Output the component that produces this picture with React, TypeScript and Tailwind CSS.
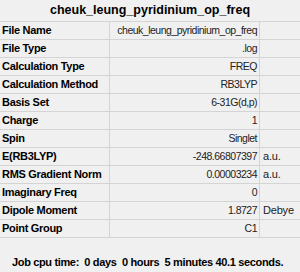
const ROWS: [string, string, string][] = [
  ["File Name", "cheuk_leung_pyridinium_op_freq", ""],
  ["File Type", ".log", ""],
  ["Calculation Type", "FREQ", ""],
  ["Calculation Method", "RB3LYP", ""],
  ["Basis Set", "6-31G(d,p)", ""],
  ["Charge", "1", ""],
  ["Spin", "Singlet", ""],
  ["E(RB3LYP)", "-248.66807397", "a.u."],
  ["RMS Gradient Norm", "0.00003234", "a.u."],
  ["Imaginary Freq", "0", ""],
  ["Dipole Moment", "1.8727", "Debye"],
  ["Point Group", "C1", ""],
];

export default function App() {
  return (
    <div
      className="w-[300px] h-[272px] bg-[#f0f0f0] text-black overflow-hidden"
      style={{ fontFamily: "'Liberation Sans', Arial, sans-serif" }}
    >
      <div className="h-[21px] flex items-center justify-center font-bold text-[12.5px]">
        cheuk_leung_pyridinium_op_freq
      </div>

      <div className="border-t border-[#d4d4d4]">
        {ROWS.map(([label, value, unit]) => (
          <div key={label} className="flex h-[18px] border-b border-[#d4d4d4] text-[11px]">
            <div className="w-[110px] border-r border-[#d4d4d4] pl-[2px] font-bold tracking-[-0.3px] flex items-center">
              {label}
            </div>
            <div className="w-[150px] border-r border-[#d4d4d4] pr-[2px] flex items-center justify-end text-[10.5px] tracking-[-0.5px] text-[#222]">
              {value}
            </div>
            <div className="flex-1 pl-[3px] flex items-center tracking-[-0.2px] text-[#222]">{unit}</div>
          </div>
        ))}
      </div>

      <div className="mt-[16px] pl-[12px] font-bold text-[11px] tracking-[-0.35px] whitespace-pre">
        {"Job cpu time:  0 days  0 hours  5 minutes 40.1 seconds."}
      </div>
    </div>
  );
}
